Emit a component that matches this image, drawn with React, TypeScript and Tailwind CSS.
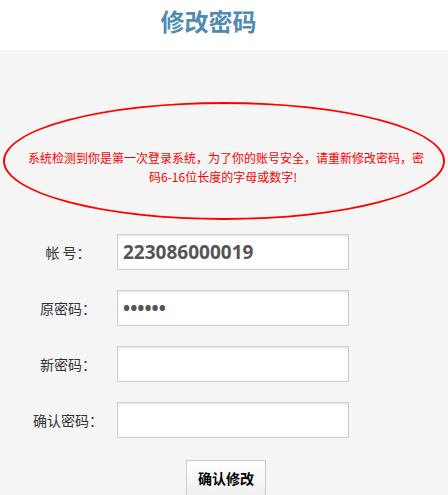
import React from "react";

const cjk = { fontFamily: '"Noto Sans CJK SC", "Noto Sans", sans-serif' };

const rows = [
  { label: "帐 号：", value: "223086000019" },
  { label: "原密码：", value: "••••••" },
  { label: "新密码：", value: "" },
  { label: "确认密码：", value: "" },
];

const App = () => {
  return (
    <div className="w-[448px] h-[495px] overflow-hidden bg-[#f5f5f5]" style={cjk}>
      <div className="h-[50px] bg-white flex justify-center pr-[31px] pt-[4px]">
        <h1 className="text-[24px] leading-[34px] font-bold text-[#4f8bb5]">修改密码</h1>
      </div>

      <div className="mt-[52px] mx-[3px] h-[118px] rounded-[50%] border-2 border-[#ff0000] flex items-center justify-center pt-[12px]">
        <p className="w-[420px] text-center text-[12px] leading-[19px] text-[#ff0000] pl-[4px]">
          系统检测到你是第一次登录系统，为了你的账号安全，请重新修改密码，密
          <br />
          <span className="pr-[6px]">码6-16位长度的字母或数字!</span>
        </p>
      </div>

      <div className="mt-[14px] flex flex-col gap-[20px]">
        {rows.map((row) => (
          <div key={row.label} className="flex items-center">
            <label className="ml-[19px] w-[98px] text-center text-[14px] text-[#333]">{row.label}</label>
            <input
              readOnly
              value={row.value}
              className="w-[232px] h-[36px] border border-[#ccc] bg-white pl-[5px] text-[19px] font-bold text-[#555] outline-none shadow-[inset_0_2px_2px_rgba(0,0,0,0.08)]"
              style={{ fontFamily: '"Open Sans", sans-serif' }}
            />
          </div>
        ))}
      </div>

      <div className="mt-[22px] flex justify-center pl-[4px]">
        <button className="w-[80px] h-[36px] border border-[#ccc] bg-gradient-to-b from-white to-[#f0f0f0] text-[14px] font-bold text-black">
          确认修改
        </button>
      </div>
    </div>
  );
};

export default App;
